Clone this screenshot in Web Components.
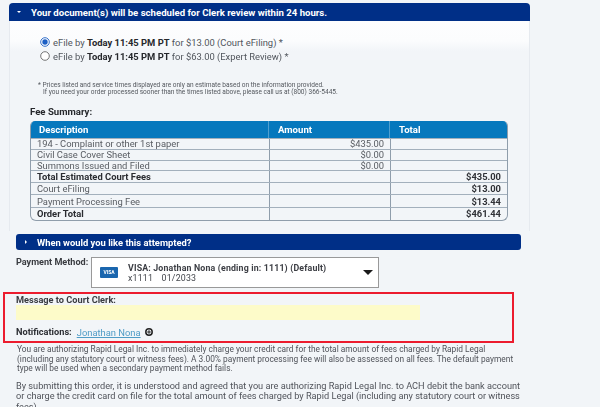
<!DOCTYPE html>
<html lang="en">
<head>
<meta charset="utf-8">
<title>Order review</title>
<style>
    html, body { margin: 0; padding: 0; height: 407px; overflow: hidden; background: #f2f5f8; }
    body { font-family: Roboto, "Liberation Sans", Arial, sans-serif; color: #333; }
</style>
</head>
<body>
<order-page>
    <review-panel slot="review">
        <service-option checked>eFile by <b>Today 11:45 PM PT</b> for $13.00 (Court eFiling) *</service-option>
        <service-option>eFile by <b>Today 11:45 PM PT</b> for $63.00 (Expert Review) *</service-option>
    </review-panel>
    <fee-summary slot="fees"></fee-summary>
    <section-bar slot="attempt" class="attempt" rounded>When would you like this attempted?</section-bar>
    <payment-method slot="payment"></payment-method>
    <clerk-message slot="message"></clerk-message>
    <legal-text slot="legal"></legal-text>
</order-page>

<script>
(function () {
    // 页面外框：各区块按顺序排列
    class OrderPage extends HTMLElement {
        constructor() {
            super();
            this.attachShadow({ mode: 'open' });
            this.shadowRoot.innerHTML = `
                <style>
                    :host { display: block; width: 600px; height: 407px; overflow: hidden; filter: blur(0.3px); }
                    .page { display: flex; flex-direction: column; padding-top: 3px; }
                </style>
                <div class="page">
                    <slot name="review"></slot>
                    <slot name="fees"></slot>
                    <slot name="attempt"></slot>
                    <slot name="payment"></slot>
                    <slot name="message"></slot>
                    <slot name="legal"></slot>
                </div>
            `;
        }
    }

    class SectionBar extends HTMLElement {
        constructor() {
            super();
            this.attachShadow({ mode: 'open' });
            this.shadowRoot.innerHTML = `
                <style>
                    :host { display: block; }
                    :host(.attempt) { margin: 3px 79px 0 16px; }
                    .bar {
                        display: flex;
                        align-items: center;
                        height: 18px;
                        padding-left: 8px;
                        gap: 10px;
                        background: #002f87;
                        color: #fff;
                        font-size: 9.6px;
                        font-weight: 700;
                        border-radius: 4px 4px 0 0;
                        white-space: nowrap;
                    }
                    :host([rounded]) .bar { height: 16px; padding-left: 9px; gap: 10px; border-radius: 3px; font-size: 9.4px; }
                    .arrow { width: 0; height: 0; border-left: 2px solid transparent; border-right: 2px solid transparent; border-top: 2px solid #fff; }
                    :host([rounded]) .arrow { border: 0; border-left: 2px solid #fff; border-top: 2px solid transparent; border-bottom: 2px solid transparent; }
                </style>
                <div class="bar"><span class="arrow"></span><span><slot></slot></span></div>
            `;
        }
    }

    class ServiceOption extends HTMLElement {
        constructor() {
            super();
            this.attachShadow({ mode: 'open' });
            const checked = this.hasAttribute('checked');
            this.shadowRoot.innerHTML = `
                <style>
                    :host { display: flex; align-items: center; gap: 3px; height: 14px; font-size: 9.4px; color: #50555c; white-space: nowrap; }
                    ::slotted(b) { color: #26282c; font-weight: 700; }
                    svg { width: 10px; height: 10px; flex: none; }
                </style>
                <svg viewBox="0 0 10 10">
                    <circle cx="5" cy="5" r="4.3" fill="#fff" stroke="${checked ? '#1c5fc4' : '#666'}" stroke-width="0.9"/>
                    ${checked ? '<circle cx="5" cy="5" r="2.7" fill="#1c5fc4"/>' : ''}
                </svg>
                <span><slot></slot></span>
            `;
        }
    }

    class ReviewPanel extends HTMLElement {
        constructor() {
            super();
            this.attachShadow({ mode: 'open' });
            this.shadowRoot.innerHTML = `
                <style>
                    :host { display: block; margin: 0 70px 0 9px; }
                    .body {
                        padding: 14px 0 0 30px;
                        height: 76px;
                        box-sizing: border-box;
                        background: linear-gradient(#fdfdfe 0, #fbfcfd 20px, #f2f5f8 30px);
                        border-right: 1px solid #e6eaef;
                        border-left: 1px solid #e6eaef;
                    }
                    .note { margin: 19px 0 0 -2px; font-size: 6.55px; line-height: 7.4px; color: #54585e; white-space: nowrap; }
                    .note div + div { padding-left: 5px; }
                </style>
                <section-bar>Your document(s) will be scheduled for Clerk review within 24 hours.</section-bar>
                <div class="body">
                    <slot></slot>
                    <div class="note">
                        <div>* Prices listed and service times displayed are only an estimate based on the information provided.</div>
                        <div>If you need your order processed sooner than the times listed above, please call us at (800) 366-5445.</div>
                    </div>
                </div>
            `;
        }
    }

    // 费用明细表，数据写在类里
    class FeeSummary extends HTMLElement {
        constructor() {
            super();
            this.attachShadow({ mode: 'open' });
            const rows = [
                ['194 - Complaint or other 1st paper', '$435.00', '', 10.5, false],
                ['Civil Case Cover Sheet', '$0.00', '', 11, false],
                ['Summons Issued and Filed', '$0.00', '', 10.5, false],
                ['Total Estimated Court Fees', '', '$435.00', 12, true],
                ['Court eFiling', '', '$13.00', 12, false],
                ['Payment Processing Fee', '', '$13.44', 13, false],
                ['Order Total', '', '$461.44', 12.5, true]
            ];
            this.shadowRoot.innerHTML = `
                <style>
                    :host {
                        display: block;
                        margin: 0 70px 0 9px;
                        padding: 9px 21px 10.5px 20px;
                        border-left: 1px solid #e6eaef;
                        border-right: 1px solid #e6eaef;
                    }
                    h3 { margin: 0 0 4px; font-size: 9.6px; line-height: 11px; font-weight: 700; color: #26282c; }
                    .table { border: 1px solid #8f9dab; border-top: 0; border-radius: 5px 5px 6px 6px; overflow: hidden; }
                    .row {
                        display: grid;
                        grid-template-columns: 238px 121px 1fr;
                        font-size: 9.4px;
                        color: #585c62;
                        border-top: 1px solid #a3b0bc;
                        box-sizing: border-box;
                    }
                    .row > div { display: flex; align-items: center; padding: 0 6px; white-space: nowrap; overflow: hidden; }
                    .row > div + div { border-left: 1px solid #8f9dab; justify-content: flex-end; }
                    .row.total { color: #2a2c31; font-weight: 700; }
                    .row > div:last-child { font-weight: 700; color: #2f3136; }
                    .head { height: 17px; background: #0678bd; color: #fff; font-size: 9.6px; font-weight: 700; border-top: 0; margin: 0 -1px; }
                    .head > div { padding-left: 9px; }
                    .head > div + div { justify-content: flex-start; border-left: 1px solid #4f9fd0; }
                    .head > div:last-child { color: #fff; }
                </style>
                <h3>Fee Summary:</h3>
                <div class="table">
                    <div class="row head"><div>Description</div><div>Amount</div><div>Total</div></div>
                    ${rows.map((row) => `
                        <div class="row ${row[4] ? 'total' : ''}" style="height:${row[3]}px">
                            <div>${row[0]}</div><div>${row[1]}</div><div>${row[2]}</div>
                        </div>
                    `).join('')}
                </div>
            `;
        }
    }

    class PaymentMethod extends HTMLElement {
        constructor() {
            super();
            this.attachShadow({ mode: 'open' });
            this.shadowRoot.innerHTML = `
                <style>
                    :host { display: flex; gap: 3px; margin: 7px 0 0 16px; font-size: 9.1px; }
                    label { width: 72px; line-height: 10px; font-weight: 700; color: #3a3c41; white-space: nowrap; }
                    .select {
                        display: flex;
                        align-items: center;
                        box-sizing: border-box;
                        width: 288px;
                        height: 31px;
                        padding-left: 8px;
                        background: #fff;
                        border: 1px solid #999;
                    }
                    .visa {
                        width: 18px; height: 11px; margin-right: 10px; flex: none;
                        background: #1a66ae; color: #fff; border-radius: 1px;
                        font-size: 5px; font-weight: 700; line-height: 11px; text-align: center;
                    }
                    .text { flex: 1; font-size: 8.8px; line-height: 10px; color: #43464c; white-space: nowrap; }
                    .name { font-weight: 700; color: #3c3e44; letter-spacing: 0.16px; }
                    .sub { letter-spacing: 0.2px; }
                    .sub span { margin-left: 6px; }
                    .caret { width: 0; height: 0; margin: 0 5px 0 0; border-left: 5.5px solid transparent; border-right: 5.5px solid transparent; border-top: 5.5px solid #1a1a1a; }
                </style>
                <label>Payment Method:</label>
                <div class="select">
                    <div class="visa">VISA</div>
                    <div class="text">
                        <div class="name">VISA: Jonathan Nona (ending in: 1111) (Default)</div>
                        <div class="sub">x1111 <span>01/2033</span></div>
                    </div>
                    <div class="caret"></div>
                </div>
            `;
        }
    }

    class ClerkMessage extends HTMLElement {
        constructor() {
            super();
            this.attachShadow({ mode: 'open' });
            this.shadowRoot.innerHTML = `
                <style>
                    :host {
                        display: block;
                        box-sizing: border-box;
                        width: 511px;
                        height: 50.5px;
                        margin: 4px 0 0 3px;
                        padding: 1px 0 0 11px;
                        border: 2px solid #ec1c2e;
                        font-size: 9.2px;
                        color: #3a3c41;
                    }
                    b { display: block; line-height: 10px; }
                    .field { width: 404px; height: 15px; background: #fdfbc9; }
                    .notify { display: flex; align-items: center; gap: 5px; margin-top: 6.5px; line-height: 11px; }
                    .notify b { color: #2d2f34; }
                    a { color: #4f9cc6; text-decoration: underline; font-size: 9.4px; }
                    svg { width: 8px; height: 8px; margin-left: -1px; }
                </style>
                <b>Message to Court Clerk:</b>
                <div class="field"></div>
                <div class="notify">
                    <b>Notifications:</b>
                    <a href="#">Jonathan Nona</a>
                    <svg viewBox="0 0 8 8">
                        <circle cx="4" cy="4" r="3.2" fill="none" stroke="#222" stroke-width="1.5"/>
                        <path d="M2.2 4h3.6M4 2.2v3.6" stroke="#222" stroke-width="1"/>
                    </svg>
                </div>
            `;
        }
    }

    class LegalText extends HTMLElement {
        constructor() {
            super();
            this.attachShadow({ mode: 'open' });
            this.shadowRoot.innerHTML = `
                <style>
                    :host { display: block; margin: 2.5px 0 0 16px; width: 520px; color: #50535a; white-space: nowrap; }
                    p { margin: 0; }
                    .first { padding-left: 1px; font-size: 8.35px; line-height: 9.6px; }
                    .second { margin-top: 7px; font-size: 9.2px; line-height: 10.4px; }
                </style>
                <p class="first">You are authorizing Rapid Legal Inc. to immediately charge your credit card for the total amount of fees charged by Rapid Legal<br>(including any statutory court or witness fees). A 3.00% payment processing fee will also be assessed on all fees. The default payment<br>type will be used when a secondary payment method fails.</p>
                <p class="second">By submitting this order, it is understood and agreed that you are authorizing Rapid Legal Inc. to ACH debit the bank account<br>or charge the credit card on file for the total amount of fees charged by Rapid Legal (including any statutory court or witness<br>fees).</p>
            `;
        }
    }

    customElements.define('section-bar', SectionBar);
    customElements.define('service-option', ServiceOption);
    customElements.define('review-panel', ReviewPanel);
    customElements.define('fee-summary', FeeSummary);
    customElements.define('payment-method', PaymentMethod);
    customElements.define('clerk-message', ClerkMessage);
    customElements.define('legal-text', LegalText);
    customElements.define('order-page', OrderPage);
}());
</script>
</body>
</html>
